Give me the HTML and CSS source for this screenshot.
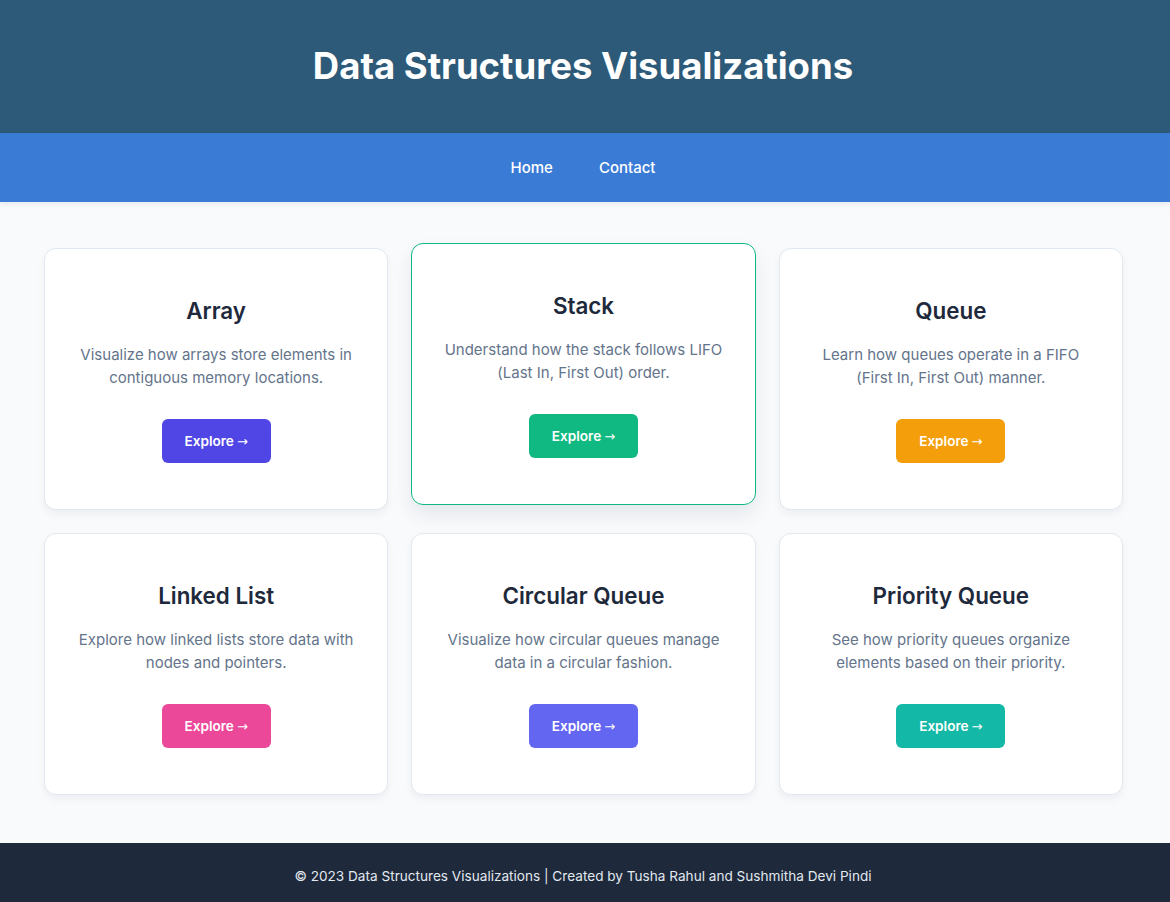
FILE: index.html
```html
<!DOCTYPE html>
<html lang="en">
<head>
<meta charset="UTF-8">
<title>Data Structures Visualizations</title>
<link rel="stylesheet" href="styles.css">
</head>
<body>
<header class="site-header">
  <h1 class="site-title">Data Structures Visualizations</h1>
</header>
<nav class="site-nav">
  <a class="nav-link" href="#">Home</a>
  <a class="nav-link" href="#">Contact</a>
</nav>
<main class="main">
  <div class="grid">
    <div class="card">
      <h2 class="card-title">Array</h2>
      <p class="card-text">Visualize how arrays store elements in contiguous memory locations.</p>
      <a class="btn btn-indigo" href="#">Explore <span class="arrow">→</span></a>
    </div>
    <div class="card card-raised">
      <h2 class="card-title">Stack</h2>
      <p class="card-text">Understand how the stack follows LIFO (Last In, First Out) order.</p>
      <a class="btn btn-green" href="#">Explore <span class="arrow">→</span></a>
    </div>
    <div class="card">
      <h2 class="card-title">Queue</h2>
      <p class="card-text">Learn how queues operate in a FIFO (First In, First Out) manner.</p>
      <a class="btn btn-amber" href="#">Explore <span class="arrow">→</span></a>
    </div>
    <div class="card">
      <h2 class="card-title">Linked List</h2>
      <p class="card-text">Explore how linked lists store data with nodes and pointers.</p>
      <a class="btn btn-pink" href="#">Explore <span class="arrow">→</span></a>
    </div>
    <div class="card">
      <h2 class="card-title">Circular Queue</h2>
      <p class="card-text">Visualize how circular queues manage data in a circular fashion.</p>
      <a class="btn btn-violet" href="#">Explore <span class="arrow">→</span></a>
    </div>
    <div class="card">
      <h2 class="card-title">Priority Queue</h2>
      <p class="card-text">See how priority queues organize elements based on their priority.</p>
      <a class="btn btn-teal" href="#">Explore <span class="arrow">→</span></a>
    </div>
  </div>
</main>
<footer class="site-footer">
  <p class="footer-text">© 2023 Data Structures Visualizations | Created by Tusha Rahul and Sushmitha Devi Pindi</p>
</footer>
</body>
</html>
```

FILE: styles.css
```css
* { box-sizing: border-box; }

html, body {
  margin: 0;
  padding: 0;
}

body {
  font-family: Inter, "Noto Sans", "Liberation Sans", sans-serif;
  background: #f8fafc;
  color: #1e293b;
}

.site-header {
  background: #2c5a78;
  padding: 42px 4px 43px 0;
  text-align: center;
}

.site-title {
  margin: 0;
  font-size: 36.5px;
  line-height: 48px;
  font-weight: 700;
  color: #ffffff;
}

.site-nav {
  background: #3a7bd5;
  height: 69px;
  padding-right: 4px;
  display: flex;
  justify-content: center;
  align-items: center;
  gap: 46px;
  box-shadow: 0 2px 6px rgba(15, 23, 42, 0.08);
  position: relative;
}

.nav-link {
  color: #ffffff;
  text-decoration: none;
  font-size: 15px;
  font-weight: 500;
}

.main {
  padding: 46px 47px 48px 44px;
}

.grid {
  display: grid;
  grid-template-columns: repeat(3, 1fr);
  gap: 23px;
}

.card {
  background: #ffffff;
  border: 1px solid #e2e8f0;
  border-radius: 12px;
  box-shadow: 0 4px 8px rgba(15, 23, 42, 0.05);
  padding: 47px 28px 46px;
  text-align: center;
  display: flex;
  flex-direction: column;
  align-items: center;
}

.card-raised {
  border-color: #10b981;
  transform: translateY(-5px);
  box-shadow: 0 10px 20px rgba(15, 23, 42, 0.08);
}

.card-title {
  margin: 0 0 18px;
  font-size: 22.4px;
  line-height: 29px;
  font-weight: 600;
  color: #1e293b;
}

.card-text {
  margin: 0 0 30px;
  font-size: 15px;
  line-height: 23px;
  color: #64748b;
}

.btn {
  display: inline-flex;
  align-items: center;
  justify-content: center;
  gap: 3px;
  width: 109px;
  height: 44px;
  border-radius: 6px;
  color: #ffffff;
  text-decoration: none;
  font-size: 13.6px;
  font-weight: 600;
}

.arrow {
  font-family: "DejaVu Sans", sans-serif;
  font-weight: 400;
  font-size: 13px;
}

.btn-indigo { background: #4f46e5; }
.btn-green { background: #10b981; }
.btn-amber { background: #f59e0b; }
.btn-pink { background: #ec4899; }
.btn-violet { background: #6366f1; }
.btn-teal { background: #14b8a6; }

.site-footer {
  background: #1e293b;
  height: 59px;
  padding: 6px 4px 0 0;
  display: flex;
  align-items: center;
  justify-content: center;
}

.footer-text {
  margin: 0;
  font-size: 13.6px;
  color: #e2e8f0;
}
```
